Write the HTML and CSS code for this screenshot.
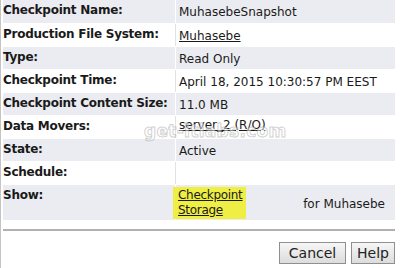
FILE: index.html
```html
<!DOCTYPE html>
<html>
<head>
<meta charset="utf-8">
<link rel="stylesheet" href="styles.css">
</head>
<body>
<div class="frame">
  <table class="props">
    <tr class="alt"><th>Checkpoint Name:</th><td>MuhasebeSnapshot</td></tr>
    <tr><th>Production File System:</th><td><a href="#">Muhasebe</a></td></tr>
    <tr class="alt"><th>Type:</th><td>Read Only</td></tr>
    <tr><th>Checkpoint Time:</th><td>April 18, 2015 10:30:57 PM EEST</td></tr>
    <tr class="alt"><th>Checkpoint Content Size:</th><td>11.0 MB</td></tr>
    <tr><th>Data Movers:</th><td class="top"><a href="#">server_2 (R/O)</a></td></tr>
    <tr class="alt"><th>State:</th><td>Active</td></tr>
    <tr><th>Schedule:</th><td></td></tr>
    <tr class="alt show"><th>Show:</th><td><div class="showcell"><a class="hl" href="#">Checkpoint<br>Storage</a><span class="for">for Muhasebe</span></div></td></tr>
  </table>
  <div class="rule"></div>
  <div class="buttons">
    <button class="btn cancel">Cancel</button>
    <button class="btn help">Help</button>
  </div>
  <div class="watermark">get-itlabs.com</div>
</div>
</body>
</html>
```
FILE: styles.css
```css
html, body { margin: 0; padding: 0; background: #fff; }
body { font-family: "DejaVu Sans", Verdana, sans-serif; font-size: 12px; color: #1a1a1a; }
.frame { position: relative; height: 268px; border-left: 1px solid #c4c4c4; padding-left: 2px; width: 392px; }
.props { width: 392px; border-collapse: collapse; table-layout: fixed; }
.props tr { height: 23px; }
.props th { width: 172px; text-align: left; vertical-align: top; font-weight: bold; letter-spacing: -0.25px; padding: 3px 0 0 0; border-right: 1px solid #e2e2e2; border-bottom: 1px solid #fff; white-space: nowrap; }
.props td { vertical-align: top; padding: 5px 0 0 3px; border-bottom: 1px solid #fff; white-space: nowrap; }
.props td.top { padding-top: 2px; }
.props tr.alt th, .props tr.alt td { background: #ebecf1; border-right-color: #fff; }
.props tr.show { height: 36px; }
.props tr.show td { padding: 2px 10px 0 0; }
.props a { color: #1a1a1a; text-decoration: underline; }
.showcell { display: flex; align-items: center; justify-content: space-between; margin-left: -3px; }
.hl { background: #eeee44; padding: 0 3px 0 5px; line-height: 15px; height: 32px; display: flex; align-items: center; letter-spacing: -0.3px; }
.for { padding-top: 2px; }
.rule { height: 0; border-top: 2px solid #b0b0b0; margin-top: 8px; }
.buttons { display: flex; justify-content: flex-end; gap: 5px; margin-top: 11px; }
.btn { font-family: "DejaVu Sans", Verdana, sans-serif; font-size: 14px; color: #222; background: linear-gradient(#f6f6f6, #dcdcdc); border: 1px solid #8f8f8f; height: 22px; padding: 0; margin: 0; border-radius: 0; line-height: 18px; text-align: center; }
.cancel { width: 67px; }
.help { width: 44px; }
.watermark { position: absolute; left: 143px; top: 121px; font-size: 17px; font-weight: bold; color: rgba(255,255,255,0.5); -webkit-text-stroke: 1px rgba(150,150,150,0.45); letter-spacing: 0.3px; pointer-events: none; }
```
